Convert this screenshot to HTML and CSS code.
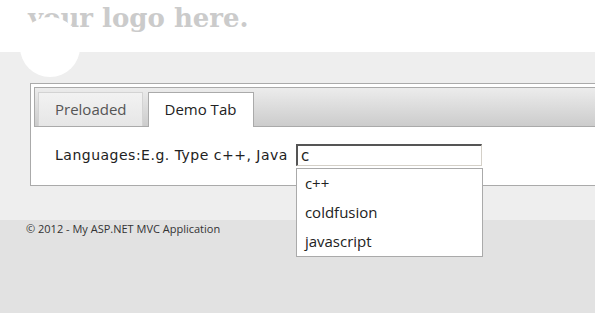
FILE: index.html
```html
<!DOCTYPE html>
<html lang="en">
<head>
    <meta charset="UTF-8">
    <title>Home Page - My ASP.NET MVC Application</title>
    <link rel="stylesheet" href="styles.css">
</head>
<body>
    <header class="site-header">
        <p class="site-title">your logo here.</p>
        <div class="logo-circle"></div>
    </header>

    <div class="main">
        <div class="tabs">
            <ul class="tab-nav">
                <li class="tab">Preloaded</li>
                <li class="tab tab-active">Demo Tab</li>
            </ul>
            <div class="tab-panel">
                <label class="field-label" for="languages">Languages:E.g. Type c++, Java</label>
                <div class="field">
                    <input type="text" id="languages" class="text-box" value="c">
                    <ul class="autocomplete">
                        <li>c++</li>
                        <li>coldfusion</li>
                        <li>javascript</li>
                    </ul>
                </div>
            </div>
        </div>
    </div>

    <footer class="site-footer">
        <p>&copy; 2012 - My ASP.NET MVC Application</p>
    </footer>
</body>
</html>
```

FILE: styles.css
```css
html, body {
    margin: 0;
    padding: 0;
}
body {
    min-height: 100vh;
    background-color: #e2e2e2;
    font-family: "Open Sans", "Liberation Sans", sans-serif;
    color: #333;
}
.site-header {
    background-color: #fff;
    height: 52px;
    position: relative;
    z-index: 1;
}
.site-title {
    margin: 0;
    padding: 3px 0 0 28px;
    font-family: "DejaVu Serif", serif;
    font-weight: bold;
    font-size: 26px;
    line-height: 30px;
    color: #cbcbcb;
}
.logo-circle {
    position: absolute;
    left: 20px;
    top: 17px;
    width: 60px;
    height: 60px;
    border-radius: 50%;
    background-color: #fff;
}
.main {
    background-color: #eee;
    padding: 31px 0 34px 30px;
}
.tabs {
    border: 1px solid #aaa;
    border-right: none;
    background-color: #fff;
    padding: 3px 0 0 3px;
    height: 98px;
}
.tab-nav {
    list-style: none;
    margin: 0;
    padding: 4px 0 0 3px;
    height: 34px;
    border: 1px solid #aaa;
    border-right: none;
    background: linear-gradient(#ececec, #cccccc);
    display: flex;
    gap: 5px;
}
.tab {
    height: 34px;
    box-sizing: border-box;
    padding: 0 15px 0 16px;
    border: 1px solid #d3d3d3;
    border-bottom: none;
    background: linear-gradient(#f2f2f2, #e6e6e6);
    color: #555;
    font-size: 15px;
    line-height: 33px;
}
.tab-active {
    height: 35px;
    border-color: #aaa;
    background: #fff;
    color: #222;
    padding: 0 17px 0 16px;
}
.tab-panel {
    display: flex;
    align-items: center;
    padding: 17px 0 0 21px;
}
.field-label {
    font-family: "DejaVu Sans", "Liberation Sans", sans-serif;
    font-size: 14px;
    letter-spacing: 0.5px;
    color: #222;
    margin-right: 8px;
}
.field {
    position: relative;
}
.text-box {
    display: block;
    width: 186px;
    height: 22px;
    box-sizing: border-box;
    margin: 0;
    padding: 0 3px;
    border: 1px solid #d4d0c8;
    border-top: 2px solid #555;
    border-left: 2px solid #555;
    font-family: "DejaVu Sans", sans-serif;
    font-size: 15px;
    color: #222;
    outline: none;
}
.autocomplete {
    position: absolute;
    left: 0;
    top: 24px;
    width: 187px;
    box-sizing: border-box;
    margin: 0;
    padding: 0;
    list-style: none;
    background-color: #fff;
    border: 1px solid #aaa;
    z-index: 2;
}
.autocomplete li {
    padding: 0 8px;
    font-size: 15px;
    line-height: 29px;
    color: #222;
}
.site-footer p {
    margin: 0;
    padding: 0 0 0 26px;
    font-size: 11px;
    line-height: 18px;
    color: #333;
}
```
